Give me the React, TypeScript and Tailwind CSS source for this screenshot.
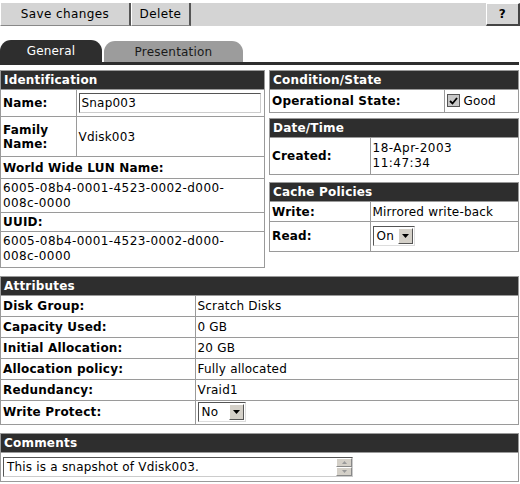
import React from "react";

const F = { fontFamily: '"DejaVu Sans", Verdana, sans-serif' };

function Header({ children }: { children: React.ReactNode }) {
  return (
    <div className="h-[18px] leading-[18px] bg-[#2e2e2e] text-white font-bold px-[3px] text-[12px] tracking-[0.2px]">
      {children}
    </div>
  );
}

function Select({ value, w }: { value: string; w: string }) {
  return (
    <div className={`inline-flex items-center h-[20px] bg-white border border-t-[#555] border-l-[#555] border-b-[#ddd] border-r-[#ddd] ${w}`}>
      <span className="flex-1 pl-[3px] leading-[18px]">{value}</span>
      <span className="w-[15px] h-[16px] mr-[1px] bg-[#d4d0c8] border border-t-white border-l-white border-b-[#555] border-r-[#555] flex items-center justify-center">
        <svg width="7" height="4" viewBox="0 0 7 4"><path d="M0 0h7L3.5 4z" fill="#000" /></svg>
      </span>
    </div>
  );
}

const td = "border border-[#9a9a9a] px-[2px] py-0 align-middle";

export default function App() {
  return (
    <div className="w-[520px] h-[484px] overflow-hidden bg-white text-[12px] tracking-[0.2px] text-black" style={F}>
      {/* toolbar */}
      <div className="mt-[3px] h-[23px] bg-[#d4d4d4] flex text-[12px] tracking-[0.4px]">
        <div className="w-[131px] flex items-center justify-center border-r-2 border-b border-r-[#555] border-b-[#888] border-l border-l-white">Save changes</div>
        <div className="w-[60px] flex items-center justify-center border-r-2 border-b border-r-[#555] border-b-[#888] border-l border-l-white">Delete</div>
        <div className="flex-1" />
        <div className="w-[34px] flex items-center justify-center font-bold border-l border-t border-white border-r-2 border-b-2 border-r-[#444] border-b-[#444] bg-[#d4d4d4]">?</div>
      </div>
      {/* tabs */}
      <div className="mt-[14px] flex items-end h-[22px] text-[12px] tracking-[0.2px]">
        <div className="w-[102px] h-[22px] bg-[#2e2e2e] text-white rounded-t-[11px] flex items-center justify-center">General</div>
        <div className="ml-[2px] w-[139px] h-[21px] bg-[#9c9c9c] text-[#1a1a1a] rounded-t-[11px] flex items-center justify-center">Presentation</div>
      </div>
      <div className="h-[3px] bg-[#2e2e2e] w-[519px]" />

      {/* top panels */}
      <div className="mt-[5px] flex items-start">
        <div className="w-[265px] border border-[#9a9a9a]">
          <Header>Identification</Header>
          <table className="w-full border-collapse">
            <tbody>
              <tr className="h-[27px]">
                <td className={`${td} w-[75px] font-bold border-l-0`}>Name:</td>
                <td className={`${td} border-r-0`}>
                  <div className="h-[20px] w-[182px] border border-t-[#555] border-l-[#555] border-b-[#ccc] border-r-[#ccc] pl-[2px] leading-[18px]">Snap003</div>
                </td>
              </tr>
              <tr className="h-[40px]">
                <td className={`${td} font-bold leading-[14px] border-l-0`}>Family<br />Name:</td>
                <td className={`${td} border-r-0`}>Vdisk003</td>
              </tr>
              <tr className="h-[22px]">
                <td colSpan={2} className={`${td} font-bold border-x-0`}>World Wide LUN Name:</td>
              </tr>
              <tr className="h-[34px]">
                <td colSpan={2} className={`${td} leading-[15px] border-x-0 tracking-[0.4px]`}>6005-08b4-0001-4523-0002-d000-<br />008c-0000</td>
              </tr>
              <tr className="h-[17px]">
                <td colSpan={2} className={`${td} font-bold border-x-0`}>UUID:</td>
              </tr>
              <tr className="h-[35px]">
                <td colSpan={2} className={`${td} leading-[15px] border-x-0 border-b-0 tracking-[0.4px]`}>6005-08b4-0001-4523-0002-d000-<br />008c-0000</td>
              </tr>
            </tbody>
          </table>
        </div>

        <div className="ml-[4px] w-[250px] flex flex-col">
          <div className="border border-[#9a9a9a]">
            <Header>Condition/State</Header>
            <table className="w-full border-collapse">
              <tbody>
                <tr className="h-[22px]">
                  <td className={`${td} w-[174px] font-bold border-l-0 border-b-0`}>Operational State:</td>
                  <td className={`${td} border-r-0 border-b-0`}>
                    <div className="flex items-center gap-[4px] h-[20px]">
                      <span className="w-[13px] h-[13px] bg-[#c8c8c8] border border-[#555] flex items-center justify-center">
                        <svg width="9" height="8" viewBox="0 0 9 8"><path d="M1 4l2.5 2.5L8 1" stroke="#000" strokeWidth="1.8" fill="none" /></svg>
                      </span>
                      <span>Good</span>
                    </div>
                  </td>
                </tr>
              </tbody>
            </table>
          </div>
          <div className="mt-[5px] border border-[#9a9a9a]">
            <Header>Date/Time</Header>
            <table className="w-full border-collapse">
              <tbody>
                <tr className="h-[37px]">
                  <td className={`${td} w-[100px] font-bold border-l-0 border-b-0`}>Created:</td>
                  <td className={`${td} leading-[15px] border-r-0 border-b-0 tracking-[0.5px]`}>18-Apr-2003<br />11:47:34</td>
                </tr>
              </tbody>
            </table>
          </div>
          <div className="mt-[7px] border border-[#9a9a9a]">
            <Header>Cache Policies</Header>
            <table className="w-full border-collapse">
              <tbody>
                <tr className="h-[20px]">
                  <td className={`${td} w-[100px] font-bold border-l-0`}>Write:</td>
                  <td className={`${td} border-r-0`}>Mirrored write-back</td>
                </tr>
                <tr className="h-[29px]">
                  <td className={`${td} font-bold border-l-0 border-b-0`}>Read:</td>
                  <td className={`${td} border-r-0 border-b-0`}><Select value="On" w="w-[42px]" /></td>
                </tr>
              </tbody>
            </table>
          </div>
        </div>
      </div>

      {/* Attributes */}
      <div className="mt-[8px] w-[519px] border border-[#9a9a9a]">
        <Header>Attributes</Header>
        <table className="w-full border-collapse">
          <tbody>
            {[
              ["Disk Group:", "Scratch Disks"],
              ["Capacity Used:", "0 GB"],
              ["Initial Allocation:", "20 GB"],
              ["Allocation policy:", "Fully allocated"],
              ["Redundancy:", "Vraid1"],
            ].map(([l, v]) => (
              <tr key={l} className="h-[21px]">
                <td className={`${td} w-[194px] font-bold border-l-0`}>{l}</td>
                <td className={`${td} border-r-0`}>{v}</td>
              </tr>
            ))}
            <tr className="h-[24px]">
              <td className={`${td} font-bold border-l-0 border-b-0`}>Write Protect:</td>
              <td className={`${td} border-r-0 border-b-0`}><Select value="No" w="w-[48px]" /></td>
            </tr>
          </tbody>
        </table>
      </div>

      {/* Comments */}
      <div className="mt-[8px] w-[519px] border border-[#9a9a9a]">
        <Header>Comments</Header>
        <div className="h-[29px] flex items-center px-[2px] border-t border-[#9a9a9a]">
          <div className="w-[350px] h-[20px] flex border border-t-[#555] border-l-[#555] border-b-[#ccc] border-r-[#ccc] bg-white">
            <span className="flex-1 pl-[3px] leading-[18px]">This is a snapshot of Vdisk003.</span>
            <div className="w-[16px] flex flex-col">
              <span className="flex-1 bg-[#d4d0c8] border border-t-white border-l-white border-b-[#888] border-r-[#888] flex items-center justify-center">
                <svg width="5" height="3" viewBox="0 0 5 3"><path d="M0 3h5L2.5 0z" fill="#999" /></svg>
              </span>
              <span className="flex-1 bg-[#d4d0c8] border border-t-white border-l-white border-b-[#888] border-r-[#888] flex items-center justify-center">
                <svg width="5" height="3" viewBox="0 0 5 3"><path d="M0 0h5L2.5 3z" fill="#999" /></svg>
              </span>
            </div>
          </div>
        </div>
      </div>
    </div>
  );
}
